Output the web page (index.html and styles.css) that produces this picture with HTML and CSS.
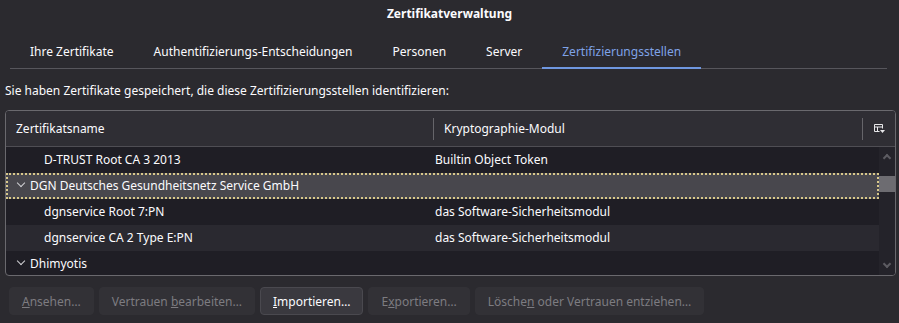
FILE: index.html
```html
<html>

<head>
  <title>Zertifikatverwaltung</title>
  <link rel="stylesheet" href="styles.css">
</head>

<body>
  <div class="title">Zertifikatverwaltung</div>
  <div class="tabs">
    <div class="tab">Ihre Zertifikate</div>
    <div class="tab">Authentifizierungs-Entscheidungen</div>
    <div class="tab">Personen</div>
    <div class="tab">Server</div>
    <div class="tab active">Zertifizierungsstellen</div>
  </div>
  <p class="intro">Sie haben Zertifikate gespeichert, die diese Zertifizierungsstellen identifizieren:</p>

  <div class="tree">
    <div class="head">
      <div class="col name">Zertifikatsname</div>
      <div class="col module">Kryptographie-Modul</div>
      <div class="picker">
        <svg width="11" height="10" viewBox="0 0 11 10">
          <path d="M0.5 0.5h8v4M0.5 0.5v7h5M0.5 3h8M3.5 3v4.5" fill="none" stroke="#e8e8ea" stroke-width="1"/>
          <path d="M6 6h5l-2.5 3z" fill="#e8e8ea"/>
        </svg>
      </div>
    </div>
    <div class="body">
      <div class="rows">
        <div class="row">
          <div class="cell first leaf">D-TRUST Root CA 3 2013</div>
          <div class="cell">Builtin Object Token</div>
        </div>
        <div class="row group selected">
          <div class="cell first"><span class="twisty"></span>DGN Deutsches Gesundheitsnetz Service GmbH</div>
          <div class="cell"></div>
        </div>
        <div class="row">
          <div class="cell first leaf">dgnservice Root 7:PN</div>
          <div class="cell">das Software-Sicherheitsmodul</div>
        </div>
        <div class="row alt">
          <div class="cell first leaf">dgnservice CA 2 Type E:PN</div>
          <div class="cell">das Software-Sicherheitsmodul</div>
        </div>
        <div class="row group">
          <div class="cell first"><span class="twisty"></span>Dhimyotis</div>
          <div class="cell"></div>
        </div>
      </div>
      <div class="scrollbar">
        <span class="arrow up"></span>
        <span class="thumb"></span>
        <span class="arrow down"></span>
      </div>
    </div>
  </div>

  <div class="buttons">
    <button disabled><u>A</u>nsehen…</button>
    <button disabled>Vertrauen <u>b</u>earbeiten…</button>
    <button><u>I</u>mportieren…</button>
    <button disabled>E<u>x</u>portieren…</button>
    <button disabled>Lösche<u>n</u> oder Vertrauen entziehen…</button>
  </div>
</body>

</html>
```

FILE: styles.css
```css
html {
  font-size: 12px;
  font-family: "Noto Sans", sans-serif;
}
* {
  box-sizing: border-box;
}
body {
  margin: 0;
  background-color: #2b2a2f;
  color: #fbfbfe;
}

.title {
  height: 28px;
  line-height: 28px;
  text-align: center;
  font-weight: bold;
}

.tabs {
  display: flex;
  margin: 8px 12px 0 10px;
  border-bottom: 1px solid #57565c;
}
.tab {
  padding: 0 20px;
  height: 33px;
  line-height: 32px;
  border-bottom: 2px solid transparent;
  margin-bottom: -1px;
}
.tab.active {
  color: #7fa3e8;
  border-bottom-color: #6f97e0;
}

.intro {
  margin: 12px 0 9px 5px;
  line-height: 20px;
}

.tree {
  margin: 0 3px 0 5px;
  border: 1px solid #6a696e;
  border-radius: 4px;
  background-color: #1f1e25;
  overflow: hidden;
}

.head {
  display: flex;
  align-items: center;
  height: 36px;
  background-color: #2f2e34;
  border-bottom: 1px solid #4f4e54;
}
.col {
  padding-left: 10px;
}
.col.name {
  width: 427px;
}
.col.module {
  flex: 1;
  border-left: 1px solid #66656a;
  line-height: 22px;
  padding-left: 10px;
}
.picker {
  width: 33px;
  height: 22px;
  border-left: 1px solid #66656a;
  display: flex;
  align-items: center;
  justify-content: center;
}

.body {
  display: flex;
  height: 128px;
}
.rows {
  flex: 1;
}
.row {
  display: flex;
  height: 26px;
  line-height: 26px;
}
.row.alt {
  background-color: #2a2930;
}
.row.selected {
  background-color: #48474d;
  outline: 2px dotted #d8c88a;
  outline-offset: -2px;
}
.cell {
  flex: 1;
  padding-left: 2px;
  white-space: nowrap;
}
.cell.first {
  flex: none;
  width: 427px;
  padding-left: 12px;
}
.cell.leaf {
  padding-left: 38px;
}
.twisty {
  display: inline-block;
  width: 6px;
  height: 6px;
  border-right: 1px solid #d0d0d4;
  border-bottom: 1px solid #d0d0d4;
  transform: rotate(45deg);
  margin: 0 6px 4px 0;
}

.scrollbar {
  width: 16px;
  display: flex;
  flex-direction: column;
  align-items: center;
  background-color: #24232a;
}
.thumb {
  width: 16px;
  height: 16px;
  margin-top: 15px;
  background-color: #6d6c71;
}
.arrow {
  width: 6px;
  height: 6px;
  border-left: 2px solid #5d5c62;
  border-top: 2px solid #5d5c62;
}
.arrow.up {
  transform: rotate(45deg);
  margin-top: 8px;
}
.arrow.down {
  transform: rotate(225deg);
  margin-top: auto;
  margin-bottom: 8px;
}

.buttons {
  display: flex;
  gap: 5px;
  margin: 11px 0 0 9px;
}
button {
  font: inherit;
  height: 28px;
  padding: 0 12px;
  border: 1px solid #4a494f;
  border-radius: 4px;
  background-color: #3a393f;
  color: #fbfbfe;
}
button:disabled {
  background-color: #323136;
  border-color: #323136;
  color: #7d7c81;
}
```
